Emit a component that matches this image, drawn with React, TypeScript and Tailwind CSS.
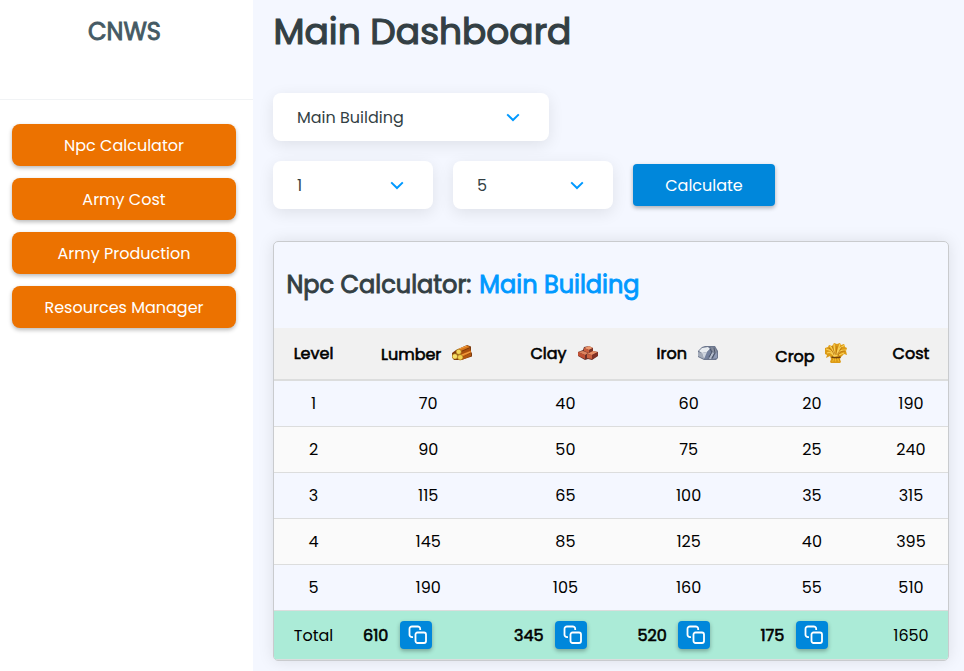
import React from "react";

const navItems = ["Npc Calculator", "Army Cost", "Army Production", "Resources Manager"];

const rows = [
  [1, 70, 40, 60, 20, 190],
  [2, 90, 50, 75, 25, 240],
  [3, 115, 65, 100, 35, 315],
  [4, 145, 85, 125, 40, 395],
  [5, 190, 105, 160, 55, 510],
];

const columns = "grid grid-cols-[79px_150.4px_124px_122.4px_124.2px_74px]";

function LumberIcon() {
  return (
    <svg width="20" height="16" viewBox="0 0 20 16">
      <path d="M4 5 15 0l4 1.500v5l1 2v3L9 15H2L0 12V8z" fill="#7d3a0c" />
      <path d="M6 4.500 15 .500l3 1.500-9 4z" fill="#d9771a" />
      <path d="M9 7 18 3l.500 3L9 10z" fill="#a9500e" />
      <path d="m9 9.500 10-4v2L10 12z" fill="#de7d20" />
      <path d="m10 12 9-4v3l-9 4z" fill="#b1570f" />
      <path d="m7 4 8-3m-5 9 8-3" stroke="#f3a042" />
      <circle cx="6.7" cy="6.8" r="2.6" fill="#f3d557" stroke="#a36b16" strokeWidth=".6" />
      <circle cx="2.9" cy="11.4" r="2.7" fill="#f6df68" stroke="#a36b16" strokeWidth=".6" />
      <circle cx="8.2" cy="12.3" r="2.7" fill="#f2d250" stroke="#a36b16" strokeWidth=".6" />
    </svg>
  );
}

function ClayIcon() {
  return (
    <svg width="20" height="16" viewBox="0 0 20 16">
      <path d="m0 7 5-2 1-3 5-1 4 2v3l5 1v4l-6 4-4-1-3 1-7-4z" fill="#6a3029" />
      <path d="m6 3 5-2 4 2-4 2z" fill="#ee9a70" />
      <path d="m6 3 5 2v3L6 6z" fill="#c85c3b" />
      <path d="m11 5 4-2v3l-4 2z" fill="#7b3328" />
      <path d="m0 7 5-1 5 2-3 2z" fill="#dd8560" />
      <path d="m0 7 7 3v4L0 10.5z" fill="#c25034" />
      <path d="m9 9 6-3 5 1-6 3z" fill="#e88e65" />
      <path d="m9 9 5 1v4l-5-1z" fill="#cc6240" />
      <path d="m14 10 6-3v3.5l-6 4z" fill="#823126" />
    </svg>
  );
}

function IronIcon() {
  return (
    <svg width="20" height="16" viewBox="0 0 20 16">
      <path d="m0 6 4-4 3-1h10l3 5v7l-2 2H6l-6-3z" fill="#6c768c" />
      <path d="m1 6 3-3 6-1 2 2-3 3-5 1z" fill="#e8ecf0" />
      <path d="m0 7 4 1 2 6-6-3z" fill="#a4acba" />
      <path d="m4 8 5-1 1 3-4 4z" fill="#d0d6df" />
      <path d="m9 7 3-3 1 5-4 5H6z" fill="#74819d" />
      <path d="m13 2 4 1 2 4-2 2-3-3z" fill="#868d9d" />
      <path d="m14 7 2 1-3 6h-2z" fill="#b5bdcb" />
      <path d="m17 9 2-2v6l-4 1z" fill="#8f9ab4" />
      <path d="m12 4 2 3-3 5m5-9 1 5-3 5" fill="none" stroke="#465065" strokeWidth=".9" />
    </svg>
  );
}

function CropIcon() {
  return (
    <svg width="22" height="20" viewBox="0 0 22 20">
      <path
        d="m0 5 3-1 1-2 3 1 2-3 3 1 3-1 1 2 3-1 1 3 2 1-1 3 1 4-3-1-3 3-1 2 1 3-2 2H7l-2-2 1-3-1-3-4 2 1-3-2-1z"
        fill="#dc9b17"
      />
      <path
        d="M9 14C8 8 5 7 1 6m9 8C9 8 7 5 5 3m5 10L9 1m2 12 4-12m-3 12c0-7 4-9 8-11m-8 11c1-6 5-6 9-6M8 12C6 9 4 9 2 10m12 2 5-2"
        fill="none"
        stroke="#f9d057"
        strokeWidth="1.2"
      />
      <path
        d="M9 12C8 8 6 7 4 5m6 6L7 3m4 9 1-9m0 9 5-8m-4 9c1-4 4-5 7-5M7 17h1m6 0h1"
        fill="none"
        stroke="#a9640d"
        strokeWidth=".6"
      />
      <path d="M6.5 14c2 1 7 1 9 0" fill="none" stroke="#71400b" strokeWidth="1.4" />
      <path d="m9 15.5-1.5 3m3-3v3m2-3 1.5 3" stroke="#f1b82b" strokeWidth="1.2" />
    </svg>
  );
}

function Chevron() {
  return (
    <svg width="14" height="9" viewBox="0 0 14 9" fill="none" className="shrink-0">
      <path d="m1.2 1.4 5.8 5.6 5.8-5.6" stroke="#0099ff" strokeWidth="2" />
    </svg>
  );
}

function SelectBox({ label, className }: { label: string; className: string }) {
  return (
    <div
      className={`flex h-12 items-center justify-between rounded-lg bg-white pl-6 text-[#333f44] shadow-[0_4px_16px_rgba(0,0,0,0.09)] ${className}`}
    >
      <span className="pt-px">{label}</span>
      <Chevron />
    </div>
  );
}

function CopyButton() {
  return (
    <button className="flex h-7 w-8 shrink-0 items-center justify-center rounded bg-[#0087db] pl-1 shadow-[0_2px_4px_rgba(0,0,0,0.3)]">
      <svg width="20" height="20" viewBox="0 0 20 20" fill="none" stroke="white" strokeWidth="1.8">
        <rect x="7.5" y="7.5" width="10.5" height="10.5" rx="2" />
        <path d="M5 12.2H4A2.5 2.5 0 0 1 1.5 9.7V4A2.5 2.5 0 0 1 4 1.5h5.7A2.5 2.5 0 0 1 12.2 4v1" />
      </svg>
    </button>
  );
}

const headers = [
  { label: "Lumber", icon: <LumberIcon />, cell: "pl-[28px]", text: "w-[71px] pt-0.5" },
  { label: "Clay", icon: <ClayIcon />, cell: "pl-[27.1px]", text: "w-[47.5px]" },
  { label: "Iron", icon: <IronIcon />, cell: "pl-[29.1px]", text: "w-[41.5px]" },
  { label: "Crop", icon: <CropIcon />, cell: "pl-[25.5px]", text: "w-[49.7px] pt-1.5" },
];

const totals = [
  { value: 610, cell: "pl-[10px]", text: "w-[37px]" },
  { value: 345, cell: "pl-[10.6px]", text: "w-[41px]" },
  { value: 520, cell: "pl-[10.1px]", text: "w-[40.5px]" },
  { value: 175, cell: "pl-[10.7px]", text: "w-[35.5px]" },
];

export default function App() {
  return (
    <div className="flex h-[671px] w-full overflow-hidden bg-[#f4f7ff] font-[Poppins,Inter,sans-serif] text-base text-black">
      <aside className="w-[253px] shrink-0 bg-white">
        <div className="h-[100px] border-b border-[#f1f3f5] pt-[14px] pr-[4px] text-center text-[24px] leading-9 text-[#455a64] [-webkit-text-stroke:0.9px_currentColor]">
          CNWS
        </div>
        <nav className="flex flex-col gap-3 pt-6 pr-[17px] pl-3">
          {navItems.map((item) => (
            <button
              key={item}
              className="h-[42px] rounded-lg bg-[#ec7200] pt-px text-white shadow-[0_2px_4px_rgba(0,0,0,0.28)]"
            >
              {item}
            </button>
          ))}
        </nav>
      </aside>

      <main className="w-[696px] shrink-0 pl-5">
        <h1 className="h-[93px] pt-1.5 pl-[0.5px] text-[36px] leading-[52px] whitespace-nowrap text-[#333f44] [-webkit-text-stroke:1.2px_currentColor]">
          Main Dashboard
        </h1>
        <SelectBox label="Main Building" className="w-[276px] pr-[29px]" />
        <div className="mt-5 flex items-center gap-5">
          <SelectBox label="1" className="w-40 pr-[29px]" />
          <SelectBox label="5" className="w-40 pr-[29px]" />
          <button className="h-[42px] w-[142px] rounded bg-[#0087db] pt-px text-white shadow-[0_2px_4px_rgba(0,0,0,0.3)]">
            Calculate
          </button>
        </div>

        <section className="mt-8 h-[420px] overflow-hidden rounded-[5px] border border-[#c9cbce] shadow-[0_0_16px_rgba(0,0,0,0.1)]">
          <h2 className="h-[86px] pt-[25px] pl-[12.5px] text-[24px] leading-9 whitespace-nowrap text-[#333f44] [-webkit-text-stroke:0.9px_currentColor]">
            Npc Calculator: <span className="ml-[1.5px] text-[#0099ff]">Main Building</span>
          </h2>
          <div
            className={`${columns} h-[53px] border-b-2 border-[#dcdddd] bg-[#f1f1f1] [-webkit-text-stroke:0.6px_currentColor]`}
          >
            <div className="flex items-center justify-center">Level</div>
            {headers.map((header) => (
              <div key={header.label} className={`flex items-center ${header.cell}`}>
                <span className={`shrink-0 ${header.text}`}>{header.label}</span>
                <span className="-mt-0.5 shrink-0">{header.icon}</span>
              </div>
            ))}
            <div className="flex items-center justify-center">Cost</div>
          </div>
          {rows.map((row) => (
            <div
              key={row[0]}
              className={`${columns} h-[46px] border-b border-[#dcdddd] odd:bg-[#f4f7ff] even:bg-[#fafafa]`}
            >
              {row.map((value, index) => (
                <div key={index} className="flex items-center justify-center">
                  {value}
                </div>
              ))}
            </div>
          ))}
          <div className={`${columns} h-[49px] border-b border-[#dcdddd] bg-[#abebd7]`}>
            <div className="flex items-center justify-center pt-px">Total</div>
            {totals.map((total) => (
              <div key={total.value} className={`flex items-center ${total.cell}`}>
                <span className={`shrink-0 pt-px [-webkit-text-stroke:0.6px_currentColor] ${total.text}`}>
                  {total.value}
                </span>
                <CopyButton />
              </div>
            ))}
            <div className="flex items-center justify-center pt-px">1650</div>
          </div>
        </section>
      </main>
    </div>
  );
}
